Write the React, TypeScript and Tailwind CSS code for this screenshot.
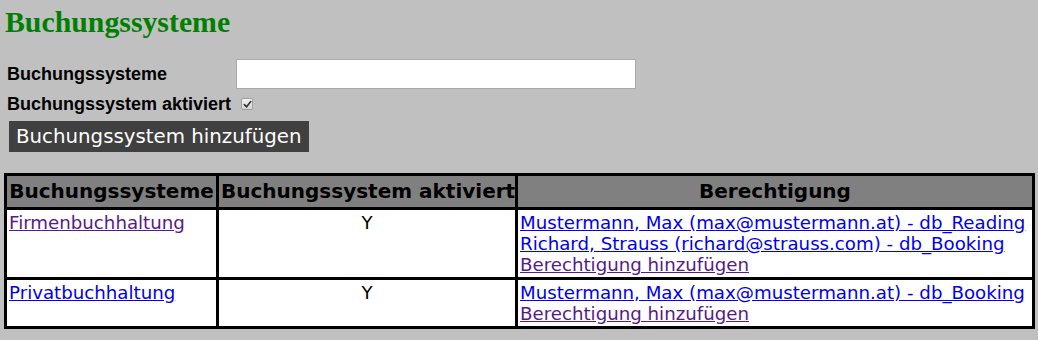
import { useState } from 'react';

interface Permission {
  label: string;
}

interface BookingSystem {
  id: string;
  name: string;
  visited: boolean;
  active: boolean;
  permissions: Permission[];
}

const systems: BookingSystem[] = [
  {
    id: 'firma',
    name: 'Firmenbuchhaltung',
    visited: true,
    active: true,
    permissions: [
      { label: 'Mustermann, Max (max@mustermann.at) - db_Reading' },
      { label: 'Richard, Strauss (richard@strauss.com) - db_Booking' },
    ],
  },
  {
    id: 'privat',
    name: 'Privatbuchhaltung',
    visited: false,
    active: true,
    permissions: [{ label: 'Mustermann, Max (max@mustermann.at) - db_Booking' }],
  },
];

const linkBlue = 'text-[#0000ee] underline';
const linkVisited = 'text-[#551a8b] underline';

function FakeCheckbox({ checked }: { checked: boolean }) {
  return (
    <span className="ml-[5px] inline-flex h-[12px] w-[12px] items-center justify-center rounded-[2px] border border-[#a0a0a0] bg-gradient-to-b from-[#f2f2f2] to-[#d6d6d6]">
      {checked && (
        <svg viewBox="0 0 10 10" className="h-[9px] w-[9px]">
          <path d="M1.5 5.2 L4 7.6 L8.6 1.8" fill="none" stroke="#333" strokeWidth="1.8" strokeLinecap="round" strokeLinejoin="round" />
        </svg>
      )}
    </span>
  );
}

export default function App() {
  const [name, setName] = useState('');
  const [active, setActive] = useState(true);

  return (
    <div className="min-h-screen bg-[#c0c0c0] pt-[5px]">
      {/* Title */}
      <h1 className="pl-[5px] font-['Liberation_Serif',serif] text-[29.8px] font-bold leading-[34px] text-[#008000]">
        Buchungssysteme
      </h1>

      {/* Form */}
      <div className="mt-[20px] grid grid-cols-[229px_auto] gap-y-[4px] pl-[7px] font-['Liberation_Sans',Arial,sans-serif] text-[18px] font-bold text-black">
        <div className="flex h-[30px] items-center">Buchungssysteme</div>
        <div className="flex h-[30px] items-center">
          <input
            value={name}
            onChange={(e) => setName(e.target.value)}
            className="h-[30px] w-[400px] border border-[#a9a9a9] bg-white px-1 outline-none"
          />
        </div>
        <div className="flex h-[22px] items-center">Buchungssystem aktiviert</div>
        <div className="flex h-[22px] items-center" onClick={() => setActive(!active)}>
          <FakeCheckbox checked={active} />
        </div>
      </div>

      <button className="ml-[9px] mt-[6px] flex h-[31px] items-center bg-[#404040] px-[7px] font-['DejaVu_Sans',Verdana,sans-serif] text-[19.8px] leading-none text-white">
        Buchungssystem hinzufügen
      </button>

      {/* Table */}
      <table className="ml-[4px] mt-[21px] w-[1031px] table-fixed border-collapse border-[3px] border-black font-['DejaVu_Sans',Verdana,sans-serif] text-[18.2px] leading-[21px] text-black">
        <colgroup>
          <col className="w-[212px]" />
          <col className="w-[299px]" />
          <col />
        </colgroup>
        <thead>
          <tr className="bg-[#808080] text-[20px] font-bold">
            <th className="whitespace-nowrap border-[3px] border-black px-[2px] py-[4px] text-center leading-[23px]">Buchungssysteme</th>
            <th className="whitespace-nowrap border-[3px] border-black px-[2px] py-[4px] text-center leading-[23px]">Buchungssystem aktiviert</th>
            <th className="whitespace-nowrap border-[3px] border-black px-[2px] py-[4px] text-center leading-[23px]">Berechtigung</th>
          </tr>
        </thead>
        <tbody className="bg-white">
          {systems.map((s) => (
            <tr key={s.id}>
              <td className="whitespace-nowrap border-[3px] border-black px-[2px] py-[2px] align-top">
                <a href="#" className={s.visited ? linkVisited : linkBlue}>
                  {s.name}
                </a>
              </td>
              <td className="border-[3px] border-black px-[2px] py-[2px] text-center align-top">
                {s.active ? 'Y' : 'N'}
              </td>
              <td className="whitespace-nowrap border-[3px] border-black px-[2px] py-[2px] align-top">
                {s.permissions.map((p, i) => (
                  <div key={i}>
                    <a href="#" className={linkBlue}>
                      {p.label}
                    </a>
                  </div>
                ))}
                <div>
                  <a href="#" className={linkVisited}>
                    Berechtigung hinzufügen
                  </a>
                </div>
              </td>
            </tr>
          ))}
        </tbody>
      </table>
    </div>
  );
}
